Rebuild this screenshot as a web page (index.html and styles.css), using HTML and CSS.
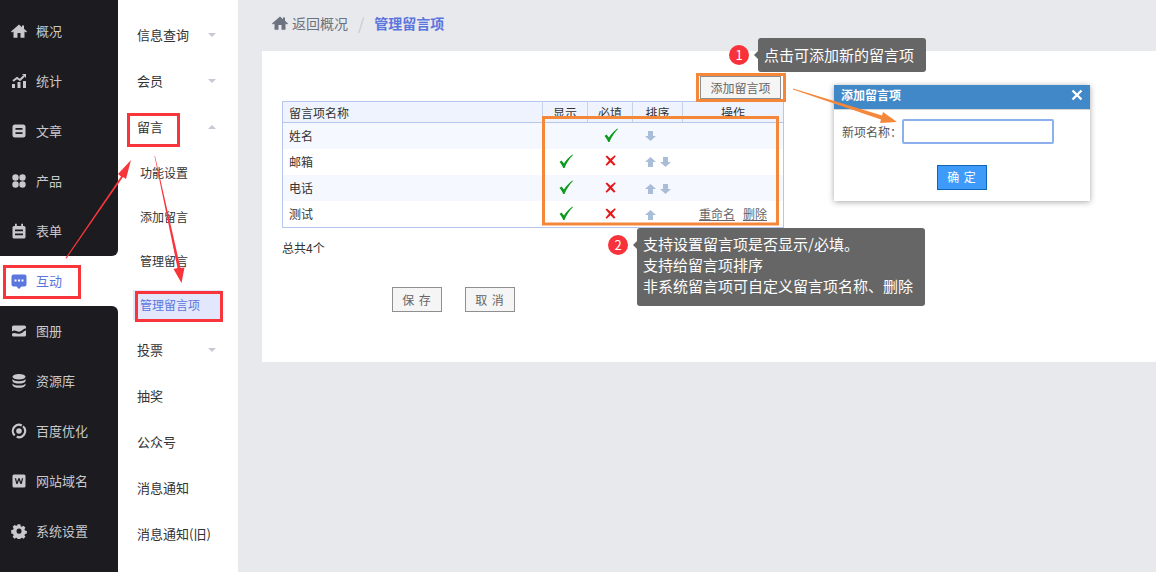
FILE: index.html
```html
<!DOCTYPE html>
<html lang="zh-CN">
<head>
    <meta charset="UTF-8">
    <title>管理留言项</title>
    <link rel="stylesheet" href="styles.css">
</head>
<body>
<div class="page">
    <!-- First level menu -->
    <div class="side">
        <div class="side-group side-group-top">
            <div class="side-item"><svg class="side-icon" viewBox="0 0 16 16"><path d="M8 1.500 0 8.400l1 1.100 1.500-1.100V14.800H6.500V10H9.500V14.800H13.500V8.400l1.500 1.100 1-1.100L13 5.800V2.500H11V4.200Z"/></svg>概况</div>
            <div class="side-item"><svg class="side-icon" viewBox="0 0 16 16"><path d="M1 11h3v4H1ZM6.500 9h3v6h-3ZM12 8h3v7h-3Z"/><path d="M2 8l4-3 3 2 4-4" fill="none" stroke="currentColor" stroke-width="2"/><path d="M11 1h4v4Z"/></svg>统计</div>
            <div class="side-item"><svg class="side-icon" viewBox="0 0 16 16"><path fill-rule="evenodd" d="M4 1.500h8A2.500 2.500 0 0 1 14.500 4v8a2.500 2.500 0 0 1-2.500 2.500H4A2.500 2.500 0 0 1 1.500 12V4A2.500 2.500 0 0 1 4 1.500ZM4.500 5v1.800h7V5ZM4.500 9.200V11h7V9.200Z"/></svg>文章</div>
            <div class="side-item"><svg class="side-icon" viewBox="0 0 16 16"><circle cx="4.500" cy="4.500" r="3.200"/><circle cx="11.500" cy="4.500" r="3.200"/><circle cx="4.500" cy="11.500" r="3.200"/><circle cx="11.500" cy="11.500" r="3.200"/></svg>产品</div>
            <div class="side-item"><svg class="side-icon" viewBox="0 0 16 16"><path fill-rule="evenodd" d="M4 .8h1.800V3h4.400V.8H12V3h1a1.500 1.500 0 0 1 1.500 1.500V14A1.500 1.500 0 0 1 13 15.500H3A1.500 1.500 0 0 1 1.500 14V4.500A1.500 1.500 0 0 1 3 3h1ZM4 6.500v1.800h8V6.500ZM4 10.500v1.800h8V10.500Z"/></svg>表单</div>
        </div>
        <div class="side-item side-item-on"><svg class="side-icon" viewBox="0 0 16 16"><path fill-rule="evenodd" d="M2.500 1.500h11A2 2 0 0 1 15.500 3.500v8a2 2 0 0 1-2 2H10.500L8 16 5.500 13.500h-3a2 2 0 0 1-2-2v-8A2 2 0 0 1 2.500 1.500ZM3.500 6.500v2h2v-2ZM7 6.500v2h2v-2ZM10.500 6.500v2h2v-2Z"/></svg>互动</div>
        <div class="side-group side-group-bottom">
            <div class="side-item"><svg class="side-icon" viewBox="0 0 16 16"><path fill-rule="evenodd" d="M2.500 2.500h11A1.500 1.500 0 0 1 15 4v8a1.500 1.500 0 0 1-1.500 1.500h-11A1.500 1.500 0 0 1 1 12V4A1.500 1.500 0 0 1 2.500 2.500ZM1 8.500c3-2.500 5 1 8 0 2.500-1 4-3.500 6-3V7.500c-2 0-3 2.500-6 3.200-3 .6-5-2-8 0Z"/></svg>图册</div>
            <div class="side-item"><svg class="side-icon" viewBox="0 0 16 16"><ellipse cx="8" cy="3.800" rx="6.500" ry="2.800"/><path d="M1.500 6c1 1.500 3.500 2.200 6.500 2.200S13.500 7.500 14.500 6V8.200C14 9.800 11 10.600 8 10.600S2 9.800 1.500 8.200Z"/><path d="M1.500 10.400c1 1.500 3.500 2.200 6.500 2.200s5.500-.7 6.500-2.200V12.200C14 13.800 11 14.800 8 14.800S2 13.800 1.500 12.200Z"/></svg>资源库</div>
            <div class="side-item"><svg class="side-icon" viewBox="0 0 16 16"><circle cx="8" cy="8" r="2.800"/><circle cx="8" cy="8" r="6.200" fill="none" stroke="currentColor" stroke-width="2.200" stroke-dasharray="17 2.500" transform="rotate(-50 8 8)"/></svg>百度优化</div>
            <div class="side-item"><svg class="side-icon" viewBox="0 0 16 16"><path fill-rule="evenodd" d="M3 1.500h10A1.500 1.500 0 0 1 14.500 3v10a1.500 1.500 0 0 1-1.500 1.500H3A1.500 1.500 0 0 1 1.500 13V3A1.500 1.500 0 0 1 3 1.500ZM3.800 5.200 5.300 11h1.300L8 7.200 9.400 11h1.300l1.500-5.800h-1.300l-.9 3.700L8.700 5.200H7.300L6 8.900 5.100 5.200Z"/></svg>网站域名</div>
            <div class="side-item"><svg class="side-icon" viewBox="0 0 16 16"><path fill-rule="evenodd" d="M6.600 .8h2.800l.4 2 1.300.6 1.800-1 2 2-1.100 1.700.6 1.400 2 .4v2.800l-2 .4-.6 1.400 1.100 1.700-2 2-1.800-1-1.300.6-.4 2H6.600l-.4-2-1.300-.6-1.800 1-2-2 1.100-1.700-.6-1.400-2-.4V6.900l2-.4.6-1.400L1.100 3.400l2-2 1.800 1 1.300-.6ZM8 5.400a2.700 2.700 0 1 0 0 5.400 2.700 2.700 0 0 0 0-5.400Z" transform="translate(0.600 0.600) scale(0.93)"/></svg>系统设置</div>
        </div>
    </div>

    <!-- Second level menu -->
    <div class="sub">
        <div class="sub-item">信息查询<span class="caret"></span></div>
        <div class="sub-item">会员<span class="caret"></span></div>
        <div class="sub-item">留言<span class="caret caret-up"></span></div>
        <div class="sub-list">
            <div class="sub-link">功能设置</div>
            <div class="sub-link">添加留言</div>
            <div class="sub-link">管理留言</div>
            <div class="sub-cur"><span class="sub-cur-text">管理留言项</span></div>
        </div>
        <div class="sub-item">投票<span class="caret"></span></div>
        <div class="sub-item">抽奖</div>
        <div class="sub-item">公众号</div>
        <div class="sub-item">消息通知</div>
        <div class="sub-item">消息通知(旧)</div>
    </div>

    <!-- Main area -->
    <div class="main">
        <div class="crumbs">
            <svg class="crumb-home" viewBox="0 0 16 16"><path d="M8 1.500 0 8.400l1 1.100 1.500-1.100V14.800H6.500V10H9.500V14.800H13.500V8.400l1.500 1.100 1-1.100L13 5.800V2.500H11V4.200Z"/></svg>
            <span class="crumb-back">返回概况</span>
            <span class="crumb-sep">/</span>
            <span class="crumb-now">管理留言项</span>
        </div>
        <div class="card">
            <div class="card-inner">
                <div class="tools"><button class="btn">添加留言项</button></div>
                <table class="grid">
                    <thead>
                        <tr><th class="col-name">留言项名称</th><th>显示</th><th>必填</th><th>排序</th><th>操作</th></tr>
                    </thead>
                    <tbody>
                        <tr>
                            <td class="col-name">姓名</td>
                            <td></td>
                            <td><svg class="ico-check" viewBox="0 0 14 14"><use href="#check"/></svg></td>
                            <td class="col-sort"><svg class="ico-arrow" viewBox="0 0 11 10"><use href="#down"/></svg></td>
                            <td></td>
                        </tr>
                        <tr>
                            <td class="col-name">邮箱</td>
                            <td><svg class="ico-check" viewBox="0 0 14 14"><use href="#check"/></svg></td>
                            <td><svg class="ico-cross" viewBox="0 0 11 11"><use href="#cross"/></svg></td>
                            <td class="col-sort"><svg class="ico-arrow" viewBox="0 0 11 10"><use href="#up"/></svg><svg class="ico-arrow" viewBox="0 0 11 10"><use href="#down"/></svg></td>
                            <td></td>
                        </tr>
                        <tr>
                            <td class="col-name">电话</td>
                            <td><svg class="ico-check" viewBox="0 0 14 14"><use href="#check"/></svg></td>
                            <td><svg class="ico-cross" viewBox="0 0 11 11"><use href="#cross"/></svg></td>
                            <td class="col-sort"><svg class="ico-arrow" viewBox="0 0 11 10"><use href="#up"/></svg><svg class="ico-arrow" viewBox="0 0 11 10"><use href="#down"/></svg></td>
                            <td></td>
                        </tr>
                        <tr>
                            <td class="col-name">测试</td>
                            <td><svg class="ico-check" viewBox="0 0 14 14"><use href="#check"/></svg></td>
                            <td><svg class="ico-cross" viewBox="0 0 11 11"><use href="#cross"/></svg></td>
                            <td class="col-sort"><svg class="ico-arrow" viewBox="0 0 11 10"><use href="#up"/></svg></td>
                            <td class="col-ops"><a>重命名</a><a>删除</a></td>
                        </tr>
                    </tbody>
                </table>
                <div class="total">总共4个</div>
                <div class="actions">
                    <button class="btn btn-wide">保 存</button>
                    <button class="btn btn-wide">取 消</button>
                </div>
            </div>
        </div>
    </div>

    <!-- Popup shown on the screenshot -->
    <div class="dialog">
        <div class="dialog-title">添加留言项<svg class="dialog-close" viewBox="0 0 12 12"><path d="M1.500 1.500l9 9M10.500 1.500l-9 9"/></svg></div>
        <div class="dialog-row"><span>新项名称：</span><input class="dialog-input" type="text"></div>
        <div class="dialog-foot"><button class="dialog-ok">确 定</button></div>
    </div>

    <!-- Notes -->
    <div class="note note-one"><span class="note-num">1</span><div class="note-box">点击可添加新的留言项</div></div>
    <div class="note note-two"><span class="note-num">2</span><div class="note-box">支持设置留言项是否显示/必填。<br>支持给留言项排序<br>非系统留言项可自定义留言项名称、删除</div></div>

    <!-- Red and orange markup over the page -->
    <svg class="marks" viewBox="0 0 1156 572">
        <g class="mark-red">
            <rect x="4.500" y="266.500" width="75" height="31"/>
            <rect x="128.500" y="114.500" width="50" height="31"/>
            <rect x="136.500" y="292.500" width="85" height="28"/>
        </g>
        <path class="fill-red" d="M65.500 258 121 176.500l-3-2.500 13-14-5 19-3-2L66.500 258.500Z"/>
        <path class="fill-red" d="M154.500 156 177.500 268l-4 1 8 14 3-15.500-4 .5L155 156Z"/>
        <g class="mark-orange">
            <rect x="697.500" y="74.500" width="87" height="26"/>
            <rect x="543.500" y="117.500" width="234" height="106.500"/>
        </g>
        <path class="fill-orange" d="M793 88.500 882 115.500l1-3.500 14 10-17 1 1-3.500L793 89.500Z"/>
        <defs>
            <path id="check" fill="#0b9a1b" d="M0.500 8 2.500 6.500 5 9.500C7 6 10 3 13.500 .5L14 1C10.500 4.500 7.500 9 5.500 14H4.200C3.300 11.500 2 9.500 .5 8Z"/>
            <path id="cross" fill="#e21a1a" d="M0.500 1.500 2 .5 5.500 3.800 9.800 .3 10.800 1.300 7 5.500 10.500 9.500 9 10.800 5.500 7.200 1.800 10.800 .5 9.800 4 5.500Z"/>
            <path id="up" fill="#a9bcd8" d="M5.500 0 11 5H8V10H3V5H0Z"/>
            <path id="down" fill="#a9bcd8" d="M3 0H8V5H11L5.500 10 0 5H3Z"/>
        </defs>
    </svg>
</div>
</body>
</html>
```

FILE: styles.css
```css
html, body {
    margin: 0;
    height: 100%;
    overflow: hidden;
}

body {
    background-color: #e8e9ed;
    font-family: "Noto Sans CJK SC", "Liberation Sans", sans-serif;
    font-size: 12px;
    color: #333;
}

.page {
    position: relative;
    display: flex;
    width: 1156px;
    height: 572px;
}

/* First level menu */
.side {
    width: 118px;
    flex: none;
    display: flex;
    flex-direction: column;
    background-color: #fff;
}

.side-group {
    background-color: #1c1b1f;
    color: #c8c8cd;
}

.side-group-top {
    height: 250px;
    padding-top: 6px;
    border-bottom-right-radius: 6px;
}

.side-group-bottom {
    flex: 1;
    border-top-right-radius: 6px;
}

.side-item {
    height: 50px;
    box-sizing: border-box;
    display: flex;
    align-items: center;
    gap: 9px;
    padding: 0 0 2px 11px;
    font-size: 13px;
}

.side-item-on {
    color: #5b76dc;
}

.side-icon {
    width: 16px;
    height: 16px;
    margin-top: 2px;
    fill: currentColor;
}

/* Second level menu */
.sub {
    width: 120px;
    flex: none;
    padding-top: 12px;
    box-sizing: border-box;
    background-color: #fff;
}

.sub-item {
    height: 46px;
    box-sizing: border-box;
    display: flex;
    align-items: center;
    justify-content: space-between;
    padding: 0 22px 2px 19px;
    font-size: 13px;
}

.caret {
    width: 0;
    height: 0;
    margin-top: 2px;
    border-left: 4px solid transparent;
    border-right: 4px solid transparent;
    border-top: 4px solid #c6cad6;
}

.caret-up {
    border-top: none;
    border-bottom: 4px solid #c6cad6;
}

.sub-list {
    padding-top: 1px;
}

.sub-link {
    height: 44px;
    box-sizing: border-box;
    display: flex;
    align-items: center;
    padding: 0 0 2px 22px;
}

.sub-cur {
    height: 44px;
    display: flex;
    align-items: center;
    padding-left: 15px;
}

.sub-cur-text {
    width: 82px;
    height: 30px;
    line-height: 30px;
    padding-left: 7px;
    background-color: #e2e7fd;
    color: #5b76dc;
}

/* Main area */
.main {
    flex: 1;
    min-width: 0;
    padding-left: 24px;
}

.crumbs {
    height: 49px;
    box-sizing: border-box;
    display: flex;
    align-items: center;
    padding: 0 0 4px 10px;
    font-size: 14px;
}

.crumb-home {
    width: 16px;
    height: 16px;
    margin-right: 4px;
    fill: #6b7280;
}

.crumb-back {
    color: #6b7280;
}

.crumb-sep {
    margin: 0 10px;
    color: #c4c9d2;
    font-size: 16px;
}

.crumb-now {
    color: #5b76dc;
    font-weight: bold;
}

.card {
    height: 311px;
    margin-top: 2px;
    padding: 25px 0 0 20px;
    box-sizing: border-box;
    background-color: #fff;
}

.card-inner {
    width: 502px;
}

.tools {
    display: flex;
    justify-content: flex-end;
    padding-right: 3px;
    margin-bottom: 2px;
}

.btn {
    height: 23px;
    width: 81px;
    padding: 0;
    background-color: #f5f5f5;
    border: 1px solid #8f8f8f;
    color: #666;
    font-family: inherit;
    font-size: 12px;
}

.btn-wide {
    width: 50px;
    height: 25px;
    letter-spacing: 1px;
}

/* Table */
.grid {
    width: 502px;
    height: 127px;
    table-layout: fixed;
    border-collapse: collapse;
    border: 1px solid #b4c7ea;
}

.grid th {
    height: 20px;
    padding: 0;
    background-color: #eef3fd;
    border-bottom: 1px solid #b4c7ea;
    font-weight: normal;
    color: #333;
}

.grid th + th {
    border-left: 1px solid #c4d2ec;
}

.grid th:nth-child(2), .grid th:nth-child(3) {
    width: 44px;
}

.grid th:nth-child(4) {
    width: 49px;
}

.grid th:nth-child(5) {
    width: 100px;
}

.grid td {
    height: 26px;
    box-sizing: border-box;
    padding: 0;
    text-align: center;
    color: #333;
}

.grid tbody tr:nth-child(odd) td {
    background-color: #f5f8fe;
}

.grid th.col-name {
    padding-left: 6px;
    text-align: left;
}

.grid td.col-name {
    padding: 0 0 1px 6px;
    text-align: left;
}

.ico-check {
    display: block;
    width: 14px;
    height: 14px;
    margin: 0 0 2px 16px;
}

.ico-cross {
    display: block;
    width: 11px;
    height: 11px;
    margin: 0 auto 2px;
}

.ico-arrow {
    width: 11px;
    height: 10px;
    margin-right: 4px;
    vertical-align: top;
}

.grid td.col-sort {
    padding: 1px 0 0 12px;
    text-align: left;
    line-height: 0;
}

.grid td.col-ops {
    padding: 0 16px 1px 0;
    text-align: right;
}

.col-ops a {
    margin-left: 8px;
    color: #666;
    text-decoration: underline;
}

.total {
    margin-top: 11px;
}

.actions {
    display: flex;
    gap: 23px;
    margin-top: 31px;
    padding-left: 110px;
}

/* Popup */
.dialog {
    position: absolute;
    left: 834px;
    top: 85px;
    width: 256px;
    height: 116px;
    background-color: #fff;
    box-shadow: 0 1px 6px rgba(0, 0, 0, 0.35);
}

.dialog-title {
    height: 25px;
    box-sizing: border-box;
    display: flex;
    align-items: center;
    justify-content: space-between;
    padding: 0 7px 5px;
    background-color: #4088c8;
    border-bottom: 1px solid #d5d5d5;
    color: #fff;
    font-weight: bold;
}

.dialog-close {
    width: 12px;
    height: 12px;
    fill: none;
    stroke: #fff;
    stroke-width: 2.400;
}

.dialog-row {
    display: flex;
    align-items: center;
    padding: 9px 0 0 8px;
    color: #555;
}

.dialog-input {
    width: 152px;
    height: 25px;
    box-sizing: border-box;
    border: 2px solid #8cb0ee;
    border-radius: 2px;
    padding: 0;
    outline: none;
}

.dialog-foot {
    display: flex;
    justify-content: center;
    padding-top: 21px;
}

.dialog-ok {
    width: 50px;
    height: 25px;
    padding: 0 0 2px;
    background-color: #3f9bfa;
    border: 1px solid #0f65b5;
    color: #fff;
    font-family: inherit;
    font-size: 12px;
    letter-spacing: 1px;
}

/* Notes */
.note {
    position: absolute;
    display: flex;
}

.note-one {
    left: 729px;
    top: 38px;
}

.note-two {
    left: 608px;
    top: 228px;
}

.note-num {
    width: 20px;
    height: 20px;
    margin: 7px 9px 0 0;
    border-radius: 50%;
    background-color: #f8323a;
    color: #fff;
    font-size: 13px;
    line-height: 20px;
    text-align: center;
}

.note-box {
    position: relative;
    padding: 4px 12px 4px 6px;
    border-radius: 3px;
    background-color: #666;
    color: #fff;
    font-size: 15px;
    line-height: 26px;
    white-space: nowrap;
}

.note-two .note-box {
    padding: 5px 12px 10px 6px;
    line-height: 21px;
}

.note-box::before {
    content: "";
    position: absolute;
    left: -4px;
    top: 13px;
    border-top: 4px solid transparent;
    border-bottom: 4px solid transparent;
    border-right: 4px solid #666;
}

/* Markup layer */
.marks {
    position: absolute;
    left: 0;
    top: 0;
    width: 1156px;
    height: 572px;
    pointer-events: none;
}

.mark-red rect {
    fill: none;
    stroke: #f7353b;
    stroke-width: 3;
}

.mark-orange rect {
    fill: none;
    stroke: #f5873a;
    stroke-width: 3;
}

.fill-red {
    fill: #f7353b;
}

.fill-orange {
    fill: #f5873a;
}
```
